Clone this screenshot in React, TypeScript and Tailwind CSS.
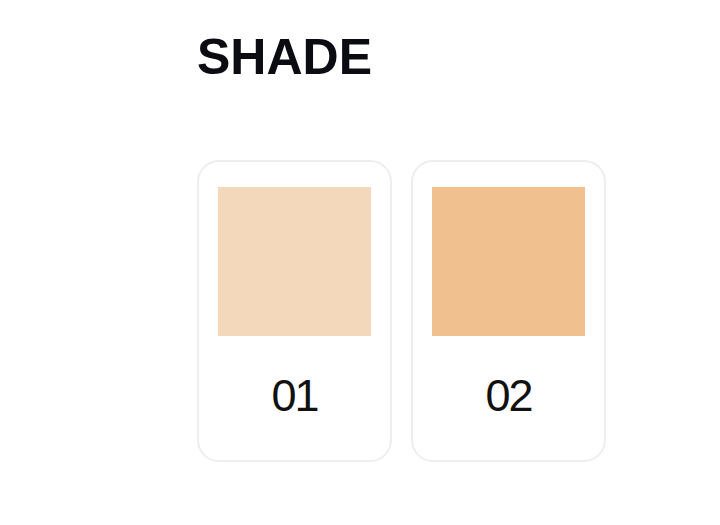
import React from "react";

const shades = [
  { code: "01", color: "#f4d8bc" },
  { code: "02", color: "#f0c08f" },
];

export default function App() {
  return (
    <div className="w-[720px] h-[525px] bg-white pl-[197px] pt-[32px]" style={{ fontFamily: '"Liberation Sans", Arial, sans-serif' }}>
      <h2 className="text-[50px] leading-none font-bold text-[#0b0b12]">SHADE</h2>
      <div className="flex gap-[19px] mt-[78px]">
        {shades.map((s) => (
          <div
            key={s.code}
            className="w-[195px] h-[302px] border-2 border-[#eeeeee] rounded-[22px] pt-[25px] flex flex-col items-center"
          >
            <div className="w-[153px] h-[149px]" style={{ backgroundColor: s.color }} />
            <div className="mt-[37px] text-[45px] leading-none text-[#111111] tracking-[-2px]">{s.code}</div>
          </div>
        ))}
      </div>
    </div>
  );
}
